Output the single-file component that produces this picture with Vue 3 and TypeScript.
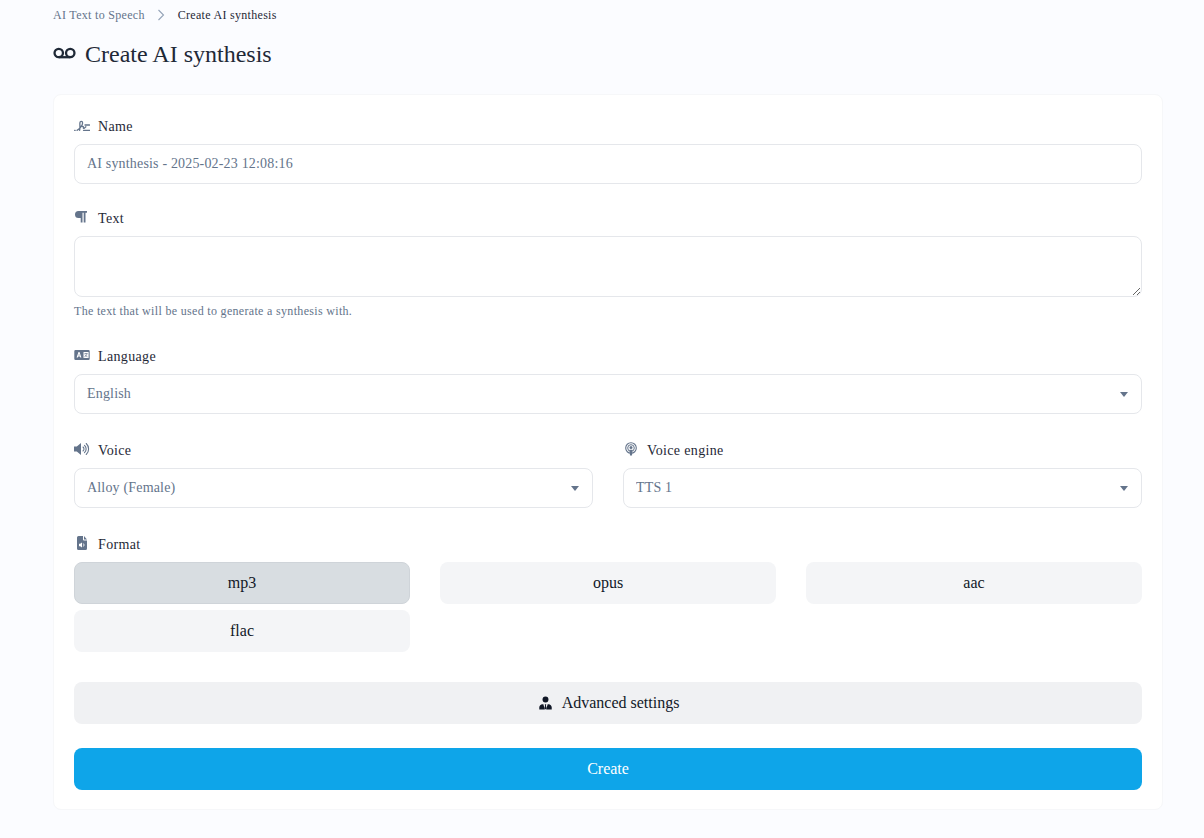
<script setup lang="ts">
const formats: string[] = ['mp3', 'opus', 'aac', 'flac']
const selected = 'mp3'
</script>

<template>
  <main class="page">
    <nav class="crumbs">
      <a class="crumb-link">AI Text to Speech</a>
      <svg class="chev" viewBox="0 0 10 12" width="10" height="12"><path d="M2.500 1 7.500 6l-5 5" fill="none" stroke="currentColor" stroke-width="1.100" /></svg>
      <span class="crumb-current">Create AI synthesis</span>
    </nav>
    <h1 class="title">
      <svg class="title-icon" viewBox="0 0 24 12" width="23" height="12">
        <circle cx="6" cy="6" r="4.400" fill="none" stroke="currentColor" stroke-width="2.400" />
        <circle cx="18" cy="6" r="4.400" fill="none" stroke="currentColor" stroke-width="2.400" />
        <path d="M6 10.400h12" stroke="currentColor" stroke-width="2.400" />
      </svg>
      Create AI synthesis
    </h1>

    <form class="card" @submit.prevent>
      <div class="field">
        <label class="label">
          <svg class="ico" viewBox="0 0 16 14" width="16" height="14"><path d="M.6 12.300h.6M3 12.300C5.500 11 8.600 7.500 8.600 5c0-2.200-2.500-2.200-2.700-.2-.2 2.400.4 4.500-.3 7.500M6.300 8.300h2.500c.6 0 .7.500.5 1.200-.2.900.5 1 1.200.4l1.400-1.100M11 7h4.500M9.500 12.300h6.200" fill="none" stroke="currentColor" stroke-width="1.300" stroke-linecap="round" stroke-linejoin="round" /></svg>
          <span>Name</span>
        </label>
        <input class="control" type="text" value="AI synthesis - 2025-02-23 12:08:16" />
      </div>

      <div class="field help-field">
        <label class="label">
          <svg class="ico" viewBox="0 0 14 14" width="14" height="14"><path d="M5 1h8.500v1.800H12V12.500h-1.800V2.800H9V12.500H7.200V8H5a3.500 3.500 0 0 1 0-7Z" fill="currentColor" transform="translate(-1.500 0)" /></svg>
          <span>Text</span>
        </label>
        <textarea class="control area"></textarea>
        <p class="help">The text that will be used to generate a synthesis with.</p>
      </div>

      <div class="field sel-field">
        <label class="label">
          <svg class="ico" viewBox="0 0 16 12" width="16" height="12">
            <path fill-rule="evenodd" d="M1.500 1h13a1.200 1.200 0 0 1 1.200 1.200v7.600A1.200 1.200 0 0 1 14.500 11h-13A1.200 1.200 0 0 1 .3 9.800V2.200A1.200 1.200 0 0 1 1.500 1ZM4.500 3 2.600 8.600h1.200l.3-1h1.800l.3 1h1.200L5.500 3ZM4.500 6.500 5 4.800l.6 1.700ZM9.500 3v6H14.600V3Z" fill="currentColor" />
            <path d="M10.500 4.500h3M13 4.500c-.3 1.600-1.200 2.700-2.600 3.300M11 5.500c.4 1 1.200 1.800 2.400 2.200" fill="none" stroke="currentColor" stroke-width=".7" />
          </svg>
          <span>Language</span>
        </label>
        <div class="select-wrap">
          <select class="control select"><option>English</option></select>
        </div>
      </div>

      <div class="two">
        <div class="field sel-field">
          <label class="label">
            <svg class="ico" viewBox="0 0 16 14" width="16" height="14">
              <path d="M0 4.500h2.800L7 1v12L2.800 9.500H0Z" fill="currentColor" />
              <path d="M9 5a2.500 2.500 0 0 1 0 4M10.500 3.300a5 5 0 0 1 0 7.400M12.200 1.500a7.500 7.500 0 0 1 0 11" fill="none" stroke="currentColor" stroke-width="1.100" stroke-linecap="round" />
            </svg>
            <span>Voice</span>
          </label>
          <div class="select-wrap">
            <select class="control select"><option>Alloy (Female)</option></select>
          </div>
        </div>
        <div class="field sel-field">
          <label class="label">
            <svg class="ico" viewBox="0 0 14 14" width="14" height="14">
              <circle cx="7" cy="6" r="5.300" fill="none" stroke="currentColor" stroke-width="1.100" />
              <circle cx="7" cy="6" r="3.300" fill="none" stroke="currentColor" stroke-width="1" />
              <circle cx="7" cy="5.500" r="1.500" fill="currentColor" />
              <path d="M5.500 7.800h3L8 13.500H6Z" fill="currentColor" />
            </svg>
            <span>Voice engine</span>
          </label>
          <div class="select-wrap">
            <select class="control select"><option>TTS 1</option></select>
          </div>
        </div>
      </div>

      <div class="field format">
        <label class="label">
          <svg class="ico" viewBox="0 0 14 14" width="14" height="14">
            <path fill-rule="evenodd" d="M3.500 0H8v3.500a1 1 0 0 0 1 1h3v8A1.500 1.500 0 0 1 10.500 14h-7A1.500 1.500 0 0 1 2 12.500v-11A1.500 1.500 0 0 1 3.500 0ZM4 7.800v2.400h1.200L7 11.600V6.400L5.200 7.800Z" fill="currentColor" />
            <path d="M9 0l3 3.500H9Z" fill="currentColor" />
            <path d="M8.300 7.500a2 2 0 0 1 0 3" fill="none" stroke="#fff" stroke-width=".9" />
          </svg>
          <span>Format</span>
        </label>
        <div class="formats">
          <button v-for="f in formats" :key="f" type="button" class="fmt" :class="{ active: f === selected }">{{ f }}</button>
        </div>
      </div>

      <button type="button" class="advanced">
        <svg viewBox="0 0 14 14" width="13" height="14">
          <circle cx="7" cy="3.300" r="3.200" fill="currentColor" />
          <path d="M.3 14v-2.300C.3 9.800 1.800 8.300 3.800 8.300h.9L6.300 14Zm7.400 0 1.600-5.700h.9c2 0 3.500 1.500 3.500 3.400V14ZM6.200 8.300h1.600l-.3 1.100.5 3.200-1 1.400-1-1.400.5-3.200Z" fill="currentColor" />
        </svg>
        <span>Advanced settings</span>
      </button>
      <button type="submit" class="create">Create</button>
    </form>
  </main>
</template>

<style scoped>
.page {
  box-sizing: border-box;
  width: 1204px;
  height: 838px;
  overflow: hidden;
  padding: 7px 41px 0 53px;
  font-family: "Liberation Serif", "Times New Roman", serif;
  color: #111827;
}
.crumbs {
  display: flex;
  align-items: center;
  height: 16px;
  font-size: 12px;
  line-height: 16px;
  letter-spacing: 0.3px;
}
.crumb-link { color: #64748b; }
.chev { margin: 0 12px 0 11px; color: #94a3b8; }
.crumb-current { color: #1f2937; }
.title {
  display: flex;
  align-items: center;
  gap: 9px;
  height: 32px;
  margin: 15px 0 24px;
  font-size: 24px;
  font-weight: 400;
  line-height: 32px;
  color: #1f2937;
}
.title-icon { margin-top: -3px; }
.card {
  box-sizing: border-box;
  display: flex;
  flex-direction: column;
  height: 716px;
  padding: 21px 20px 19px;
  background: #fff;
  border: 1px solid #f6f7f9;
  border-radius: 8px;
}
.field {
  display: flex;
  flex-direction: column;
  flex: none;
  margin-bottom: 24px;
  min-width: 0;
}
.help-field { margin-bottom: 27px; }
.sel-field { margin-bottom: 26px; }
.label {
  box-sizing: border-box;
  display: flex;
  align-items: center;
  height: 20px;
  padding-top: 2px;
  margin-bottom: 8px;
  font-size: 14px;
  line-height: 20px;
  letter-spacing: 0.35px;
  color: #1f2937;
}
.ico {
  width: 16px;
  margin-right: 8px;
  margin-top: -4px;
  color: #64748b;
  flex: none;
}
.control {
  box-sizing: border-box;
  width: 100%;
  height: 40px;
  padding: 0 12px;
  font: inherit;
  font-size: 14px;
  letter-spacing: 0.175px;
  color: #64748b;
  background: #fff;
  border: 1px solid #e5e7eb;
  border-radius: 8px;
  outline: none;
}
.area {
  display: block;
  height: 61px;
  padding: 8px 12px;
  resize: vertical;
}
.help {
  margin: 6px 0 0;
  font-size: 12px;
  line-height: 16px;
  letter-spacing: 0.32px;
  color: #64748b;
}
.select-wrap { position: relative; }
.select-wrap::after {
  content: "";
  position: absolute;
  right: 14px;
  top: 18px;
  border-left: 4px solid transparent;
  border-right: 4px solid transparent;
  border-top: 5px solid #64748b;
  pointer-events: none;
}
.select {
  appearance: none;
  -webkit-appearance: none;
  padding-bottom: 2px;
}
.two {
  display: grid;
  flex: none;
  grid-template-columns: 1fr 1fr;
  column-gap: 30px;
}
.formats {
  display: grid;
  grid-template-columns: repeat(3, 1fr);
  column-gap: 30px;
  row-gap: 6px;
}
.format { margin-bottom: 30px; }
.fmt, .advanced, .create {
  box-sizing: border-box;
  flex: none;
  height: 42px;
  padding: 0;
  font: inherit;
  font-size: 16px;
  color: #111827;
  border: 0;
  border-radius: 8px;
}
.fmt { background: #f4f5f7; }
.fmt.active {
  background: #d8dde1;
  border: 1px solid #cfd4d9;
}
.advanced {
  display: flex;
  align-items: center;
  justify-content: center;
  gap: 10px;
  padding-left: 2px;
  background: #f0f1f3;
  margin-bottom: 24px;
}
.create {
  background: #0ea5e9;
  color: #fff;
}
</style>

<style>
html, body { background: #fbfcff; }
</style>
